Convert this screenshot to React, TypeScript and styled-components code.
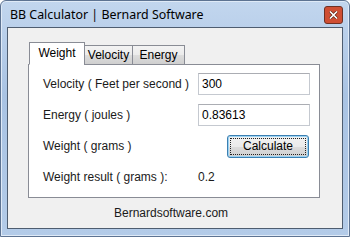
import React from 'react';
import styled, { createGlobalStyle } from 'styled-components';

const GlobalStyle = createGlobalStyle`
  html, body {
    margin: 0;
    padding: 0;
    background: #ffffff;
  }
  * {
    box-sizing: border-box;
  }
`;

const Window = styled.div`
  width: 350px;
  height: 237px;
  display: flex;
  flex-direction: column;
  border: 1px solid #5d7392;
  border-radius: 6px 6px 0 0;
  background: linear-gradient(to bottom, #c2d6ee 0%, #a9c3e3 40%, #b3cbe8 100%);
  box-shadow: inset 0 0 0 1px #dfeaf7;
  overflow: hidden;
`;

const TitleBar = styled.div`
  height: 26px;
  display: flex;
  align-items: center;
  padding: 0 6px 0 9px;
  flex-shrink: 0;
`;

const Title = styled.div`
  font-family: 'Noto Sans', 'Open Sans', sans-serif;
  font-size: 12.4px;
  color: #000;
  flex: 1;
`;

const CloseButton = styled.div`
  width: 19px;
  height: 18px;
  margin-top: 2px;
  display: flex;
  align-items: center;
  justify-content: center;
  border: 1px solid #6e3024;
  border-radius: 3px;
  background: #cf4e33;
`;

const Client = styled.div`
  flex: 1;
  margin: 0 6px 7px 6px;
  border: 1px solid #4e5d70;
  background: #f0f0f0;
  display: flex;
  flex-direction: column;
  padding: 15px 22px 0 20px;
`;

const Tabs = styled.div`
  display: flex;
  flex-direction: column;
  width: 292px;
`;

const TabStrip = styled.div`
  display: flex;
  align-items: flex-end;
  height: 22px;
  padding-left: 1px;
  position: relative;
  z-index: 1;
  margin-bottom: -1px;
`;

const Tab = styled.div<{ $active?: boolean; $w: number }>`
  font-family: 'Liberation Sans', Arial, sans-serif;
  font-size: 12px;
  color: #000;
  display: flex;
  align-items: center;
  justify-content: center;
  border: 1px solid #898c95;
  border-bottom: ${(p) => (p.$active ? '1px solid #ffffff' : '1px solid #898c95')};
  margin-left: ${(p) => (p.$active ? '0' : '-1px')};
  height: ${(p) => (p.$active ? '23px' : '20px')};
  padding: ${(p) => (p.$active ? '0 0 2px' : '0')};
  background: ${(p) =>
    p.$active ? '#ffffff' : 'linear-gradient(to bottom, #f3f3f3 0%, #ebebeb 50%, #dddddd 51%, #cfcfcf 100%)'};
  width: ${(p) => p.$w}px;
  &:first-child {
    margin-left: 0;
  }
`;

const Panel = styled.div`
  height: 134px;
  background: #ffffff;
  border: 1px solid #898c95;
  padding: 8px 0 0 14px;
`;

const Form = styled.div`
  display: grid;
  grid-template-columns: 155px 112px;
  grid-auto-rows: 22px;
  row-gap: 9px;
  align-items: center;
`;

const Label = styled.div`
  font-family: 'Liberation Sans', Arial, sans-serif;
  font-size: 12px;
  color: #1a1a1a;
  white-space: nowrap;
`;

const TextBox = styled.div`
  height: 22px;
  border: 1px solid #c5c9d0;
  border-top-color: #abadb3;
  background: #ffffff;
  padding: 0 3px;
  display: flex;
  align-items: center;
  font-family: 'Liberation Sans', Arial, sans-serif;
  font-size: 12px;
  color: #000;
`;

const Button = styled.div`
  justify-self: end;
  margin-right: 1px;
  width: 82px;
  height: 23px;
  border: 1px solid #3c7fb1;
  border-radius: 3px;
  background: linear-gradient(to bottom, #f2f2f2 0%, #ebebeb 50%, #dddddd 51%, #cfcfcf 100%);
  box-shadow: inset 0 0 0 1px #9bd3f3;
  padding: 2px;
  display: flex;
`;

const ButtonFace = styled.div`
  flex: 1;
  border: 1px dotted #222;
  display: flex;
  align-items: center;
  justify-content: center;
  font-family: 'Liberation Sans', Arial, sans-serif;
  font-size: 12px;
  color: #000;
`;

const Footer = styled.div`
  font-family: 'Liberation Sans', Arial, sans-serif;
  font-size: 12px;
  color: #1a1a1a;
  padding: 8px 0 0 86px;
`;

const App: React.FC = () => {
  return (
    <>
      <GlobalStyle />
      <Window>
        <TitleBar>
          <Title>BB Calculator | Bernard Software</Title>
          <CloseButton>
            <svg width="9" height="8" viewBox="0 0 9 8">
              <path d="M1 0.5 L8 7.5 M8 0.5 L1 7.5" stroke="#5a2418" strokeWidth="3" />
              <path d="M1 0.5 L8 7.5 M8 0.5 L1 7.5" stroke="#ffffff" strokeWidth="1.6" />
            </svg>
          </CloseButton>
        </TitleBar>
        <Client>
          <Tabs>
            <TabStrip>
              <Tab $active $w={56}>Weight</Tab>
              <Tab $w={49}>Velocity</Tab>
              <Tab $w={53}>Energy</Tab>
            </TabStrip>
            <Panel>
              <Form>
                <Label>Velocity ( Feet per second )</Label>
                <TextBox>300</TextBox>
                <Label>Energy ( joules )</Label>
                <TextBox>0.83613</TextBox>
                <Label>Weight ( grams )</Label>
                <Button>
                  <ButtonFace>Calculate</ButtonFace>
                </Button>
                <Label>Weight result ( grams ):</Label>
                <Label>0.2</Label>
              </Form>
            </Panel>
          </Tabs>
          <Footer>Bernardsoftware.com</Footer>
        </Client>
      </Window>
    </>
  );
};

export default App;
